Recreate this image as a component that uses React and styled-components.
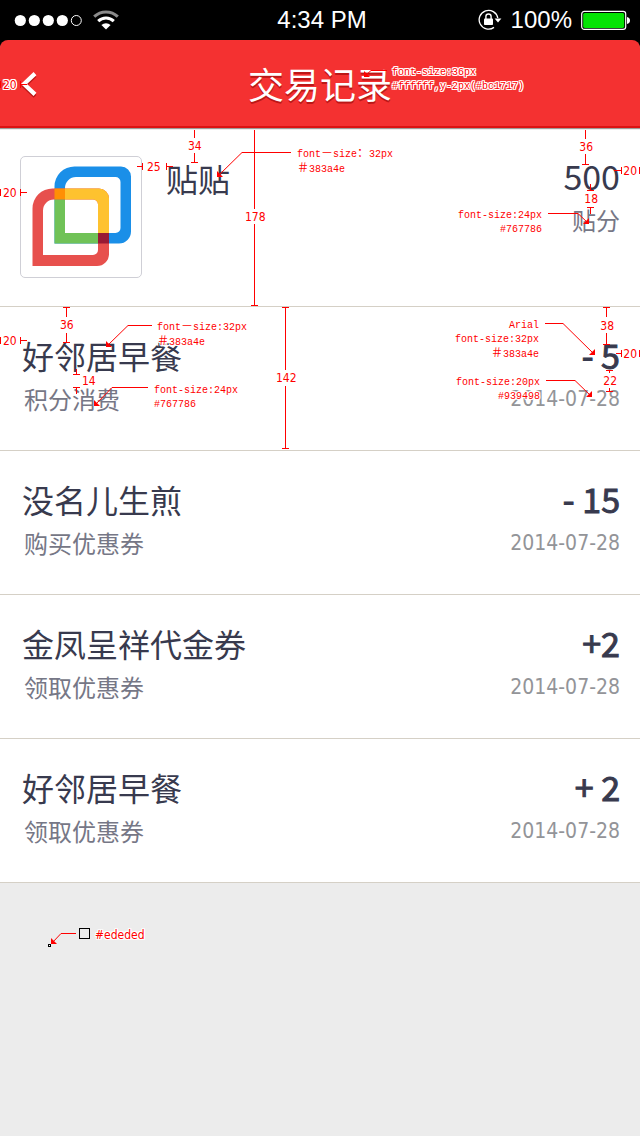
import React from "react";
import styled, { createGlobalStyle, css } from "styled-components";

const GlobalStyle = createGlobalStyle`
  *, *::before, *::after { box-sizing: border-box; }
  html { background: #ececec; }
  body {
    margin: 0;
    color: #383a4e;
    font-family: "Noto Sans CJK SC", "Noto Sans", sans-serif;
  }
  h1, h2, p, ul { margin: 0; padding: 0; font-weight: 400; }
  ul { list-style: none; }
`;

const Page = styled.div`
  min-height: 100vh;
  display: flex;
  flex-direction: column;
  overflow-x: hidden;
`;

/* ---------- status bar ---------- */

const StatusBar = styled.div`
  display: grid;
  grid-template-columns: 1fr auto 1fr;
  align-items: center;
  height: 40px;
  padding: 0 10px 0 14px;
  background: #000;
  color: #fff;
  font: 24px/40px "Liberation Sans", sans-serif;
`;

const StatusGroup = styled.div`
  display: flex;
  align-items: center;
  gap: ${(p) => p.$gap}px;
  justify-content: ${(p) => (p.$end ? "flex-end" : "flex-start")};
  svg { display: block; }
`;

/* ---------- header ---------- */

const HeaderBack = styled.div`
  background: #000;
`;

const Header = styled.header`
  position: relative;
  display: grid;
  grid-template-columns: 1fr auto 1fr;
  align-items: center;
  height: 88px;
  padding: 0 20px;
  background: #f43131;
  border-bottom: 2px solid #dc1212;
  border-radius: 8px 8px 0 0;
  box-shadow: 0 1px 0 #a09a98, 0 2px 0 #ececec;
  z-index: 1;
`;

const BackButton = styled.button`
  justify-self: start;
  display: flex;
  padding: 0;
  border: 0;
  background: none;
  cursor: pointer;
  svg { overflow: visible; }
`;

const Title = styled.h1`
  color: #fff;
  font-size: 36px;
  line-height: 48px;
  text-shadow: 0 2px 0 #bc1717;
`;

/* ---------- content ---------- */

const Summary = styled.section`
  position: relative;
  display: flex;
  gap: 24px;
  padding: 28px 20px;
  background: #fff;
  border-bottom: 1px solid #d5d0c6;
`;

const LogoBox = styled.div`
  flex: none;
  width: 122px;
  height: 122px;
  border: 1px solid #cfcfd6;
  border-radius: 5px;
  svg { display: block; }
`;

const Name = styled.h2`
  flex: 1;
  font-size: 32px;
  line-height: 44px;
`;

const Score = styled.div`
  text-align: right;
`;

const ScoreValue = styled.p`
  font-size: 34px;
  line-height: 40px;
`;

const Caption = styled.p`
  margin-top: 8px;
  padding-left: 2px;
  color: #767786;
  font-size: 24px;
  line-height: 32px;
`;

const Row = styled.li`
  position: relative;
  display: flex;
  justify-content: space-between;
  padding: 28px 20px 35px 22px;
  background: #fff;
  border-bottom: 1px solid #d5d0c6;
`;

const RowName = styled.h2`
  font-size: 32px;
  line-height: 40px;
`;

const Figures = styled.div`
  text-align: right;
`;

const Amount = styled.p`
  font-size: 34px;
  line-height: 40px;
  -webkit-text-stroke: 1px currentColor;
`;

const DateText = styled.time`
  display: block;
  margin-top: 8px;
  color: #939498;
  font: 21px/32px "DejaVu Sans Condensed", "DejaVu Sans", sans-serif;
`;

const Rest = styled.div`
  position: relative;
  flex: 1;
  min-height: 100px;
`;

/* ---------- design notes over the screen ---------- */

const Marks = styled.svg`
  position: absolute;
  top: 0;
  ${(p) => (p.$right ? "right: 0;" : "left: 0;")}
  pointer-events: none;
`;

const TitleMarks = styled.svg`
  position: absolute;
  top: 0;
  left: calc(50% + 35px);
  pointer-events: none;
`;

const halo = css`
  text-shadow: 1px 0 #fff, -1px 0 #fff, 0 1px #fff, 0 -1px #fff,
    1px 1px #fff, -1px -1px #fff, 1px -1px #fff, -1px 1px #fff;
`;

const Note = styled.div`
  position: absolute;
  top: ${(p) => p.$y}px;
  ${(p) =>
    p.$right !== undefined
      ? `right: ${p.$right}px; text-align: right;`
      : `left: ${p.$x};`}
  color: #f00;
  font: 10px/14px "Liberation Mono", "Noto Sans CJK SC", monospace;
  white-space: pre;
  pointer-events: none;
  ${(p) => p.$halo && halo}
`;

const Size = styled(Note)`
  font: 12px/14px "DejaVu Sans Condensed", "DejaVu Sans", sans-serif;
`;

const Wide = styled.span`
  font-size: 12px;
  line-height: 14px;
`;

/* Straight measuring line with ticks. */
function Rule({ d }) {
  return <path d={d} fill="none" stroke="#f00" shapeRendering="crispEdges" />;
}

/* Leader line ending in an arrow head that points down and to one side. */
function Leader({ points, x, y, toRight }) {
  const head = toRight
    ? `${x + 1},${y + 1} ${x - 5},${y + 1} ${x + 1},${y - 5}`
    : `${x - 1},${y + 1} ${x + 5},${y + 1} ${x - 1},${y - 5}`;
  return (
    <g>
      <polyline points={`${points} ${x},${y}`} fill="none" stroke="#f00" />
      <polygon points={head} fill="#f00" />
    </g>
  );
}

/* ---------- icons ---------- */

function Signal() {
  return (
    <svg width="69" height="14" viewBox="0 0 69 14" role="img" aria-label="信号">
      {[6.3, 20.3, 34.3, 48.3].map((x) => (
        <circle key={x} cx={x} cy="7.5" r="5.6" fill="#fff" />
      ))}
      <circle cx="62.3" cy="7.5" r="5" fill="none" stroke="#fff" />
    </svg>
  );
}

function Wifi() {
  return (
    <svg width="26" height="20" viewBox="0 0 26 20" role="img" aria-label="Wi-Fi">
      <path d="M1.2 6.7A17 17 0 0 1 24.8 6.7" fill="none" stroke="#8b8b8b" strokeWidth="3" />
      <path d="M5.2 11.2A11.3 11.3 0 0 1 20.8 11.2" fill="none" stroke="#fff" strokeWidth="3" />
      <path d="M8.4 15A7 7 0 0 1 17.6 15L13 19.4Z" fill="#fff" />
    </svg>
  );
}

function RotationLock() {
  return (
    <svg width="24" height="22" viewBox="0 0 24 22" role="img" aria-label="方向锁定">
      <path d="M16 18.4A9.4 9.4 0 1 1 19.8 9" fill="none" stroke="#fff" strokeWidth="1.3" />
      <path d="M16.6 9.5H23.4L20 13.5Z" fill="#fff" />
      <rect x="6" y="9.5" width="9" height="6.5" rx="0.8" fill="#fff" />
      <path d="M7.9 10V7.6A2.6 2.6 0 0 1 13.1 7.6V10" fill="none" stroke="#fff" strokeWidth="1.4" />
    </svg>
  );
}

function Battery() {
  return (
    <svg width="49" height="20" viewBox="0 0 49 20" role="img" aria-label="电池">
      <rect x="0.7" y="1.4" width="44" height="18" rx="2.6" fill="none" stroke="#fff" strokeWidth="1.2" />
      <rect x="2.2" y="2.9" width="41" height="15" rx="1.6" fill="#04e404" />
      <path d="M46 7C48 7.5 49 8.8 49 10.5S48 13.5 46 14Z" fill="#fff" />
    </svg>
  );
}

function Chevron() {
  const d = "M15 4.6L4 15L15 25.4";
  return (
    <svg width="18" height="28" viewBox="0 0 18 28" aria-hidden="true">
      <path d={d} transform="translate(0 2)" fill="none" stroke="#bc1717" strokeWidth="4" />
      <path d={d} fill="none" stroke="#fff" strokeWidth="4.2" />
    </svg>
  );
}

const BLUE_OUTER = "M33.5 86.5V29.5A20 20 0 0 1 53.5 9.5H100A10 10 0 0 1 110 19.5V74.5A12 12 0 0 1 98 86.5Z";
const BLUE_INNER = "M44 76V31A11 11 0 0 1 55 20H94.5A5 5 0 0 1 99.5 25V71A5 5 0 0 1 94.5 76Z";
const RED_OUTER = "M11.5 109V51.5A20 20 0 0 1 31.5 31.5H78A10 10 0 0 1 88 41.5V97A12 12 0 0 1 76 109Z";
const RED_INNER = "M22 98V53.5A11 11 0 0 1 33 42.5H72A5 5 0 0 1 77 47.5V93A5 5 0 0 1 72 98Z";

function Logo() {
  return (
    <svg width="120" height="120" viewBox="0 0 120 120" role="img" aria-label="贴贴">
      <defs>
        <clipPath id="redHole"><path d={RED_INNER} /></clipPath>
        <clipPath id="blueHole"><path d={BLUE_INNER} /></clipPath>
      </defs>
      <path d={BLUE_OUTER + BLUE_INNER} fillRule="evenodd" fill="#1a8fe8" />
      <path d={RED_OUTER + RED_INNER} fillRule="evenodd" fill="#e7504d" />
      <path d={BLUE_OUTER + BLUE_INNER} fillRule="evenodd" fill="#70c257" clipPath="url(#redHole)" />
      <path d={RED_OUTER + RED_INNER} fillRule="evenodd" fill="#fec22f" clipPath="url(#blueHole)" />
      <rect x="33.5" y="31.5" width="10.5" height="11" fill="#ff8f05" />
      <rect x="77" y="76" width="11" height="10.5" fill="#981a35" />
    </svg>
  );
}

/* ---------- notes of each part ---------- */

function HeaderNotes() {
  return (
    <>
      <Marks width="40" height="86" viewBox="0 40 40 86">
        <Rule d="M0.5 81V88M20.5 81V88M20 84.5H27" />
      </Marks>
      <Size $x="3px" $y={38} $halo>20</Size>
      <TitleMarks width="40" height="86" viewBox="355 40 40 86">
        <Leader points="387,70.5 371,70.5" x={365} y={76} />
      </TitleMarks>
      <Note $x="calc(50% + 72px)" $y={26} $halo>{"font-size:36px\n#ffffff,y-2px(#bc1717)"}</Note>
    </>
  );
}

function SummaryNotes() {
  return (
    <>
      <Marks width="300" height="178" viewBox="0 128 300 178">
        <Rule d="M191 129.5H198M194.5 129V138M194.5 153V163M191 162.5H198" />
        <Rule d="M137 166.5H142M142.5 163V170M166.5 163V170M167 166.5H173" />
        <Rule d="M0.5 189V196M20.5 189V196M20 192.5H27" />
        <Rule d="M251 128.5H258M254.5 128V209M254.5 224V305M251 305.5H258" />
        <Leader points="291,152.5 242,152.5" x={218} y={176} />
      </Marks>
      <Size $x="188px" $y={11}>34</Size>
      <Size $x="147px" $y={32}>25</Size>
      <Size $x="3px" $y={58}>20</Size>
      <Size $x="245px" $y={82}>178</Size>
      <Note $x="297px" $y={19}>
        font<Wide>－</Wide>size<Wide>：</Wide>32px{"\n"}<Wide>＃</Wide>383a4e
      </Note>

      <Marks $right width="200" height="178" viewBox="440 128 200 178">
        <Rule d="M582 129.5H589M585.5 129V139M585.5 154V165M582 164.5H589" />
        <Rule d="M614 170.5H621M621.5 167V174M639.5 167V174" />
        <Rule d="M590.5 184V190M587 190.5H594M587 207.5H594M590.5 207V214" />
        <Leader points="548,213.5 578,213.5" x={588} y={223} toRight />
      </Marks>
      <Size $right={47} $y={12}>36</Size>
      <Size $right={3} $y={36}>20</Size>
      <Size $right={42} $y={64}>18</Size>
      <Note $right={98} $y={81}>{"font-size:24px\n#767786"}</Note>
    </>
  );
}

function RowNotes() {
  return (
    <>
      <Marks width="300" height="143" viewBox="0 307 300 143">
        <Rule d="M63 307.5H70M66.5 307V317M66.5 333V343M63 342.5H70" />
        <Rule d="M0.5 337V344M20.5 337V344M20 340.5H27" />
        <Rule d="M76.5 369V374M73 374.5H80M73 387.5H80M76.5 387V394" />
        <Rule d="M282 307.5H289M285.5 307V370M285.5 386V448M282 448.5H289" />
        <Leader points="152,325.5 128,325.5" x={107} y={346} />
        <Leader points="148,387.5 112,387.5" x={95} y={405} />
      </Marks>
      <Size $x="60px" $y={11}>36</Size>
      <Size $x="3px" $y={27}>20</Size>
      <Size $x="82px" $y={67}>14</Size>
      <Size $x="276px" $y={64}>142</Size>
      <Note $x="157px" $y={13} $halo>
        font<Wide>－</Wide>size:32px{"\n"}<Wide>＃</Wide>383a4e
      </Note>
      <Note $x="154px" $y={77}>{"font-size:24px\n#767786"}</Note>

      <Marks $right width="200" height="143" viewBox="440 307 200 143">
        <Rule d="M603 307.5H610M606.5 307V317M606.5 333V344M603 344.5H610" />
        <Rule d="M616 353.5H621M621.5 350V357M639.5 350V357" />
        <Rule d="M606 370.5H613M609.5 370V373M609.5 388V391M606 391.5H613" />
        <Leader points="545,323.5 563,323.5" x={594} y={354} toRight />
        <Leader points="546,380.5 575,380.5" x={591} y={396} toRight />
      </Marks>
      <Size $right={26} $y={12}>38</Size>
      <Size $right={3} $y={40}>20</Size>
      <Size $right={23} $y={67}>22</Size>
      <Note $right={101} $y={12}>
        Arial{"\n"}font-size:32px{"\n"}<Wide>＃</Wide>383a4e
      </Note>
      <Note $right={100} $y={69} $halo>{"font-size:20px\n#939498"}</Note>
    </>
  );
}

function RestNotes() {
  return (
    <>
      <Marks width="100" height="80" viewBox="0 883 100 80">
        <Leader points="76,933.5 61,933.5" x={52} y={943} />
        <rect x="48.5" y="944.5" width="2" height="2" fill="#fff" stroke="#000" />
        <rect x="79.5" y="928.5" width="10" height="10" fill="none" stroke="#000" />
      </Marks>
      <Size $x="95px" $y={45} $halo>#ededed</Size>
    </>
  );
}

/* ---------- screen ---------- */

const records = [
  { name: "好邻居早餐", kind: "积分消费", amount: "- 5", date: "2014-07-28" },
  { name: "没名儿生煎", kind: "购买优惠券", amount: "- 15", date: "2014-07-28" },
  { name: "金凤呈祥代金券", kind: "领取优惠券", amount: "+2", date: "2014-07-28" },
  { name: "好邻居早餐", kind: "领取优惠券", amount: "+ 2", date: "2014-07-28" },
];

export default function App() {
  return (
    <Page>
      <GlobalStyle />
      <StatusBar>
        <StatusGroup $gap={10}>
          <Signal />
          <Wifi />
        </StatusGroup>
        <span>4:34 PM</span>
        <StatusGroup $gap={9} $end>
          <RotationLock />
          <span>100%</span>
          <Battery />
        </StatusGroup>
      </StatusBar>
      <HeaderBack>
        <Header>
          <BackButton type="button" aria-label="返回">
            <Chevron />
          </BackButton>
          <Title>交易记录</Title>
          <HeaderNotes />
        </Header>
      </HeaderBack>
      <Summary>
        <LogoBox>
          <Logo />
        </LogoBox>
        <Name>贴贴</Name>
        <Score>
          <ScoreValue>500</ScoreValue>
          <Caption>贴分</Caption>
        </Score>
        <SummaryNotes />
      </Summary>
      <ul>
        {records.map((r, i) => (
          <Row key={i}>
            <div>
              <RowName>{r.name}</RowName>
              <Caption>{r.kind}</Caption>
            </div>
            <Figures>
              <Amount>{r.amount}</Amount>
              <DateText dateTime={r.date}>{r.date}</DateText>
            </Figures>
            {i === 0 && <RowNotes />}
          </Row>
        ))}
      </ul>
      <Rest>
        <RestNotes />
      </Rest>
    </Page>
  );
}
